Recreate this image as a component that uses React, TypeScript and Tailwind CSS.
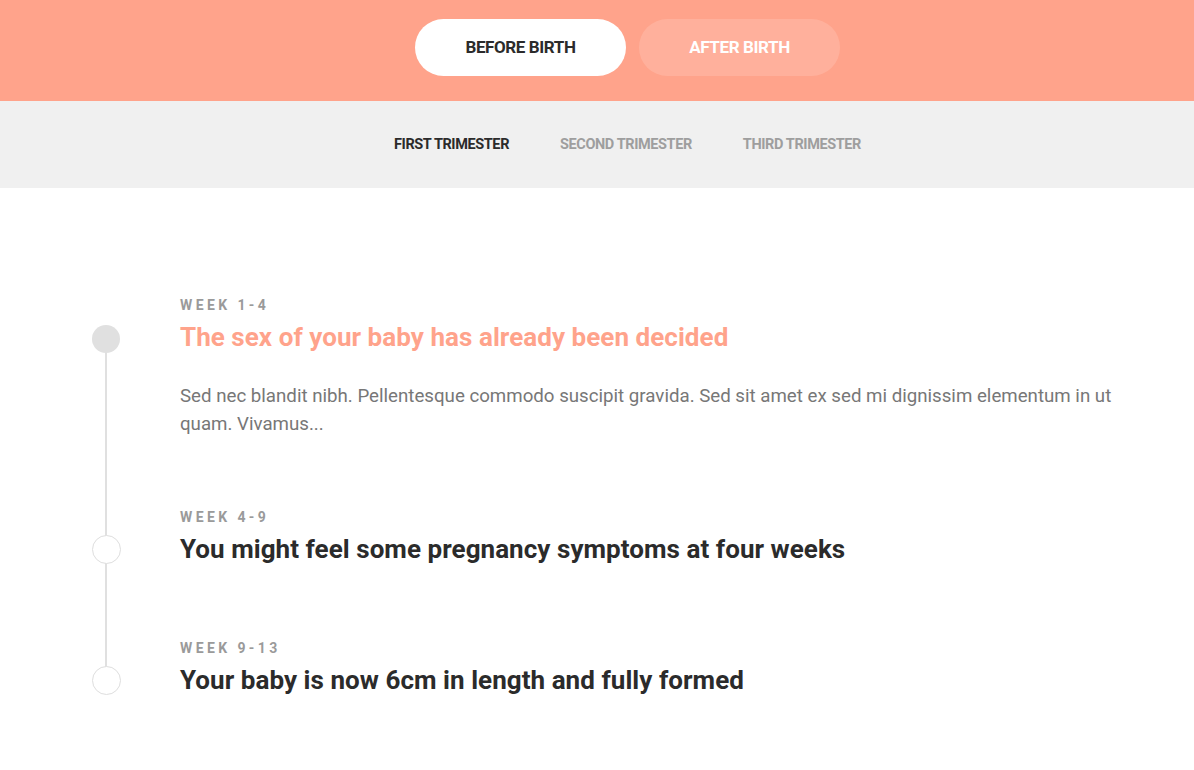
export default function App() {
  const items = [
    {
      week: "Week 1-4",
      title: "The sex of your baby has already been decided",
      text: "Sed nec blandit nibh. Pellentesque commodo suscipit gravida. Sed sit amet ex sed mi dignissim elementum in ut quam. Vivamus...",
      active: true,
      gap: "",
    },
    {
      week: "Week 4-9",
      title: "You might feel some pregnancy symptoms at four weeks",
      text: "",
      active: false,
      gap: "mt-[69px]",
    },
    {
      week: "Week 9-13",
      title: "Your baby is now 6cm in length and fully formed",
      text: "",
      active: false,
      gap: "mt-[72px]",
    },
  ];

  return (
    <div className="min-h-screen bg-white font-['Roboto',sans-serif]">
      {/* top tabs */}
      <div className="bg-[#ffa38b] h-[101px] pt-[19px] pl-[61px] flex items-start justify-center gap-[13px]">
        <button className="w-[211px] h-[57px] rounded-full bg-white text-[#2b2b2b] text-[17px] font-bold uppercase tracking-[-0.4px]">
          Before Birth
        </button>
        <button className="w-[201px] h-[57px] rounded-full bg-white/15 text-white text-[17px] font-bold uppercase tracking-[-0.4px]">
          After Birth
        </button>
      </div>

      {/* trimester tabs */}
      <div className="bg-[#f0f0f0] h-[87px] pl-[61px] pt-[1px] flex items-center justify-center gap-[51px] text-[14.5px] font-bold uppercase tracking-[-0.4px]">
        <span className="text-[#2b2b2b]">First Trimester</span>
        <span className="text-[#9e9e9e]">Second Trimester</span>
        <span className="text-[#9e9e9e]">Third Trimester</span>
      </div>

      {/* timeline */}
      <div className="pt-[107px] pl-[92px] pr-[70px]">
        <div className="relative flex flex-col">
          <div className="absolute left-[13px] top-[44px] h-[342px] w-[2px] bg-[#e0e0e0]" />
          {items.map((it) => (
            <div key={it.week} className={"flex " + it.gap}>
              <div className="w-[88px] shrink-0">
                <div
                  className={
                    it.active
                      ? "relative mt-[30px] w-[28px] h-[28px] rounded-full bg-[#e0e0e0]"
                      : "relative mt-[28px] w-[29px] h-[29px] rounded-full bg-white border border-[#dedede]"
                  }
                />
              </div>
              <div className="flex-1">
                <div className="text-[14px] leading-[20px] font-bold uppercase tracking-[3.4px] text-[#9a9a9a]">
                  {it.week}
                </div>
                <h2
                  className={
                    it.active
                      ? "mt-[5px] text-[26px] leading-[34px] font-bold tracking-[0.05px] text-[#ffa38b]"
                      : "mt-[5px] text-[26px] leading-[34px] font-bold tracking-[0.05px] text-[#2b2b2b]"
                  }
                >
                  {it.title}
                </h2>
                {it.text && (
                  <p className="mt-[28px] text-[18.7px] leading-[28px] text-[#777777]">{it.text}</p>
                )}
              </div>
            </div>
          ))}
        </div>
      </div>
    </div>
  );
}
